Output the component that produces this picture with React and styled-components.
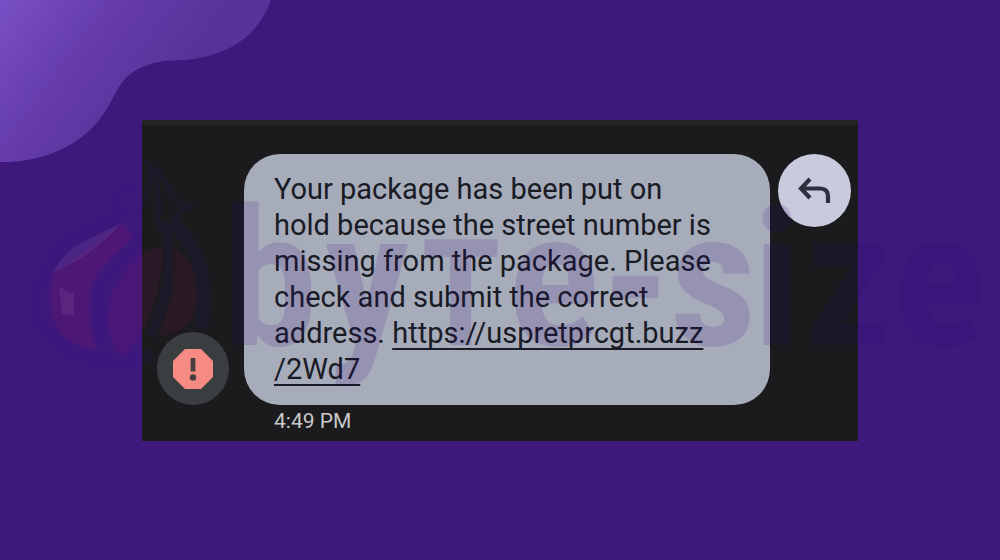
import React from 'react';
import styled, { createGlobalStyle } from 'styled-components';

export default function App () {
	return (
		<>
			<GlobalStyle />
			<Page>
				<Corner />
				<MessageCard>
					<AlertBadge type='button' aria-label='Report spam'>
						<AlertIcon />
					</AlertBadge>
					<Bubble>
						Your package has been put on<br />
						hold because the street number is<br />
						missing from the package. Please<br />
						check and submit the correct<br />
						address. <BubbleLink href='#link'>https://uspretprcgt.buzz<br />/2Wd7</BubbleLink>
					</Bubble>
					<ReplyButton type='button' aria-label='Reply'>
						<ReplyIcon />
					</ReplyButton>
					<Time>4:49 PM</Time>
				</MessageCard>
				<Watermark />
			</Page>
		</>
	);
}

function Corner () {
	return (
		<CornerSvg viewBox='0 0 280 170' aria-hidden='true'>
			<defs>
				<linearGradient id='corner' gradientUnits='userSpaceOnUse' x1='0' y1='0' x2='155' y2='115'>
					<stop offset='0' stopColor='#794fc5' />
					<stop offset='0.5' stopColor='#653caa' />
					<stop offset='1' stopColor='#583299' />
				</linearGradient>
			</defs>
			<path fill='url(#corner)' d='M0 0H271C258 36 231 53 193 59C176 62 164 58 145 66C112 79 120 99 92 128C67 153 31 163 0 162Z' />
		</CornerSvg>
	);
}

function AlertIcon () {
	return (
		<svg width='40' height='40' viewBox='0 0 40 40' aria-hidden='true'>
			<path fill='#f58b82' d='M12 0H28L40 12V28L28 40H12L0 28V12Z' />
			<path fill='#4a3f40' d='M17.600 9H22.400V22.500H17.600Z' />
			<circle cx='20' cy='28.500' r='3.200' fill='#4a3f40' />
		</svg>
	);
}

function ReplyIcon () {
	return (
		<svg width='34' height='28' viewBox='0 0 34 28' fill='none' stroke='#2e3040' strokeWidth='4.200' aria-hidden='true'>
			<path d='M12 2L3 11.500L12 21M3 11.500H22Q30 11.500 30 19.500V26' />
		</svg>
	);
}

function Watermark () {
	return (
		<WatermarkSvg viewBox='0 0 1000 560' preserveAspectRatio='xMinYMin meet' aria-hidden='true'>
			<g fill='#8a0f62' fillOpacity='0.2'>
				<path d='M122 222L133 239C98 268 88 280 89 314Q91 340 98 350C74 348 54 334 51 308Q49 290 54 271Q84 257 122 222Z' />
				<path d='M142 254C117 276 107 296 108 322Q110 346 121 357Q161 321 163 247Q151 248 142 254Z' fillOpacity='0.14' />
				<path d='M174 248C193 258 200 285 196 309Q190 334 157 336Q177 299 174 248Z' fillOpacity='0.12' />
			</g>
			<g fill='#b18ac4' fillOpacity='0.12'>
				<path d='M122 222Q93 256 54 272C66 244 94 239 122 222Z' />
				<path d='M59 287L74 294V316L62 314Z' />
			</g>
			<g fill='none' stroke='#2d1490' opacity='0.1'>
				<path strokeWidth='14' d='M122 218C76 228 38 258 37 304C37 338 66 358 104 361C124 363 142 360 152 354M174 224C194 244 204 266 204 300Q204 316 200 328' />
				<path strokeWidth='10' d='M142 236C118 264 98 280 97 310C97 334 105 350 109 362M166 222C170 262 172 292 150 336' />
				<path strokeWidth='6' d='M124 218C108 204 112 188 134 183M128 214C119 200 136 193 140 180M136 222C141 196 158 184 149 166C171 177 165 200 188 206C178 214 171 218 174 232M154 176C162 198 156 212 160 232' />
				<circle cx='35' cy='200' r='11' strokeWidth='4' />
				<circle cx='14' cy='177' r='4' strokeWidth='2' />
				<circle cx='41' cy='165' r='4' strokeWidth='2' />
				<circle cx='69' cy='186' r='4' strokeWidth='2' />
			</g>
			<Letters>
				<text x='270 367' y='345'>by</text>
				<SmallCap x='461' y='345'>T</SmallCap>
				<text x='554 636 713 777 848 940' y='345'>e-size</text>
			</Letters>
		</WatermarkSvg>
	);
}

const GlobalStyle = createGlobalStyle`
	* {
		box-sizing: border-box;
	}
	body {
		margin: 0;
		background: #3e197b;
	}
`;

const Page = styled.main`
	position: relative;
	min-height: 100vh;
	padding: 120px 14.2%;
	overflow: hidden;
	background: #3e197b;
`;

const CornerSvg = styled.svg`
	position: absolute;
	top: 0;
	left: 0;
	width: 280px;
`;

const MessageCard = styled.section`
	display: grid;
	grid-template-columns: 72px 1fr 73px;
	column-gap: 8px;
	padding: 29px 7px 8px 15px;
	border-top: 5px solid #252426;
	background: #1b1b1d;
	font-family: Roboto, 'Noto Sans', sans-serif;
`;

const RoundButton = styled.button`
	display: flex;
	align-items: center;
	justify-content: center;
	width: 73px;
	height: 73px;
	padding: 0;
	border: none;
	border-radius: 50%;
	cursor: pointer;
`;

const AlertBadge = styled(RoundButton)`
	align-self: end;
	width: 72px;
	background: #3b3e41;
`;

const ReplyButton = styled(RoundButton)`
	background: #c8cadd;
`;

const Bubble = styled.p`
	margin: 0 0 0 7px;
	padding: 17px 0 18px 30px;
	border-radius: 36px;
	background: #a7acbb;
	color: #191b25;
	font-size: 29px;
	line-height: 36px;
	white-space: nowrap;
`;

const BubbleLink = styled.a`
	color: inherit;
	text-decoration: underline;
	text-decoration-thickness: 2px;
	text-underline-offset: 5px;
	text-decoration-skip-ink: none;
`;

const Time = styled.time`
	grid-column: 2;
	padding: 4px 0 0 37px;
	color: #c9c9cb;
	font-size: 21px;
	line-height: 24px;
`;

const WatermarkSvg = styled.svg`
	position: absolute;
	top: 0;
	left: 0;
	width: 100%;
	pointer-events: none;
`;

const Letters = styled.g`
	fill: #2f0878;
	fill-opacity: 0.15;
	font-family: 'Roboto Condensed', Roboto, sans-serif;
	font-size: 192px;
	font-weight: 700;
	text-anchor: middle;
`;

const SmallCap = styled.text`
	font-size: 148px;
`;
